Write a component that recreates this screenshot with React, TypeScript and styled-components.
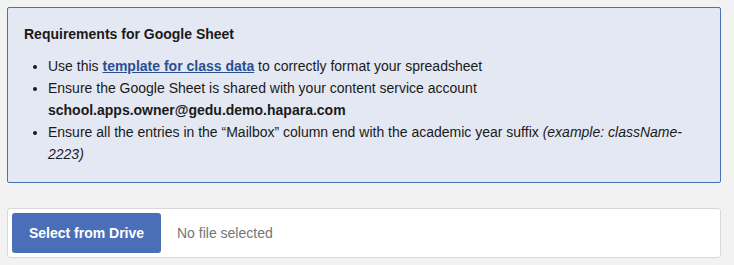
import React from 'react'
import styled, { createGlobalStyle } from 'styled-components'

const GlobalStyle = createGlobalStyle`
	html, body {
		margin: 0;
		padding: 0;
		background: #f2f2f2;
	}
	body {
		font-family: "Liberation Sans", Arial, Helvetica, sans-serif;
		font-size: 14px;
		color: #1a1a1a;
	}
`

const Page = styled.div`
	width: 714px;
	padding: 7px;
	display: flex;
	flex-direction: column;
	gap: 25px;
`

const InfoBox = styled.section`
	background: #e4e8f3;
	border: 1px solid #4a70b8;
	border-radius: 2px;
	padding: 16px 16px 17px 16px;
`

const Title = styled.h3`
	margin: 0 0 11px;
	font-size: 14px;
	line-height: 20px;
	font-weight: bold;
	color: #1a1a1a;
`

const List = styled.ul`
	margin: 0;
	padding-left: 24px;
	line-height: 22px;
`

const Item = styled.li`
	padding-right: 20px;
`

const Link = styled.a`
	color: #2a4f8f;
	font-weight: bold;
	text-decoration: underline;
`

const Strong = styled.strong`
	font-weight: bold;
`

const Example = styled.em`
	font-style: italic;
`

const FilePicker = styled.div`
	background: #ffffff;
	border: 1px solid #d8d8d8;
	border-radius: 3px;
	padding: 4px;
	display: flex;
	align-items: center;
	gap: 16px;
`

const DriveButton = styled.button`
	height: 40px;
	width: 149px;
	border: none;
	border-radius: 3px;
	background: #4a6fb8;
	color: #ffffff;
	font-family: inherit;
	font-size: 14px;
	font-weight: bold;
	cursor: pointer;
`

const FileName = styled.span`
	color: #757575;
`

const App: React.FC = () => (
	<>
		<GlobalStyle />
		<Page>
			<InfoBox>
				<Title>Requirements for Google Sheet</Title>
				<List>
					<Item>
						Use this <Link href="#">template for class data</Link> to correctly format your spreadsheet
					</Item>
					<Item>
						Ensure the Google Sheet is shared with your content service account{' '}
						<Strong>school.apps.owner@gedu.demo.hapara.com</Strong>
					</Item>
					<Item>
						Ensure all the entries in the “Mailbox” column end with the academic year suffix{' '}
						<Example>(example: className-2223)</Example>
					</Item>
				</List>
			</InfoBox>
			<FilePicker>
				<DriveButton>Select from Drive</DriveButton>
				<FileName>No file selected</FileName>
			</FilePicker>
		</Page>
	</>
)

export default App
